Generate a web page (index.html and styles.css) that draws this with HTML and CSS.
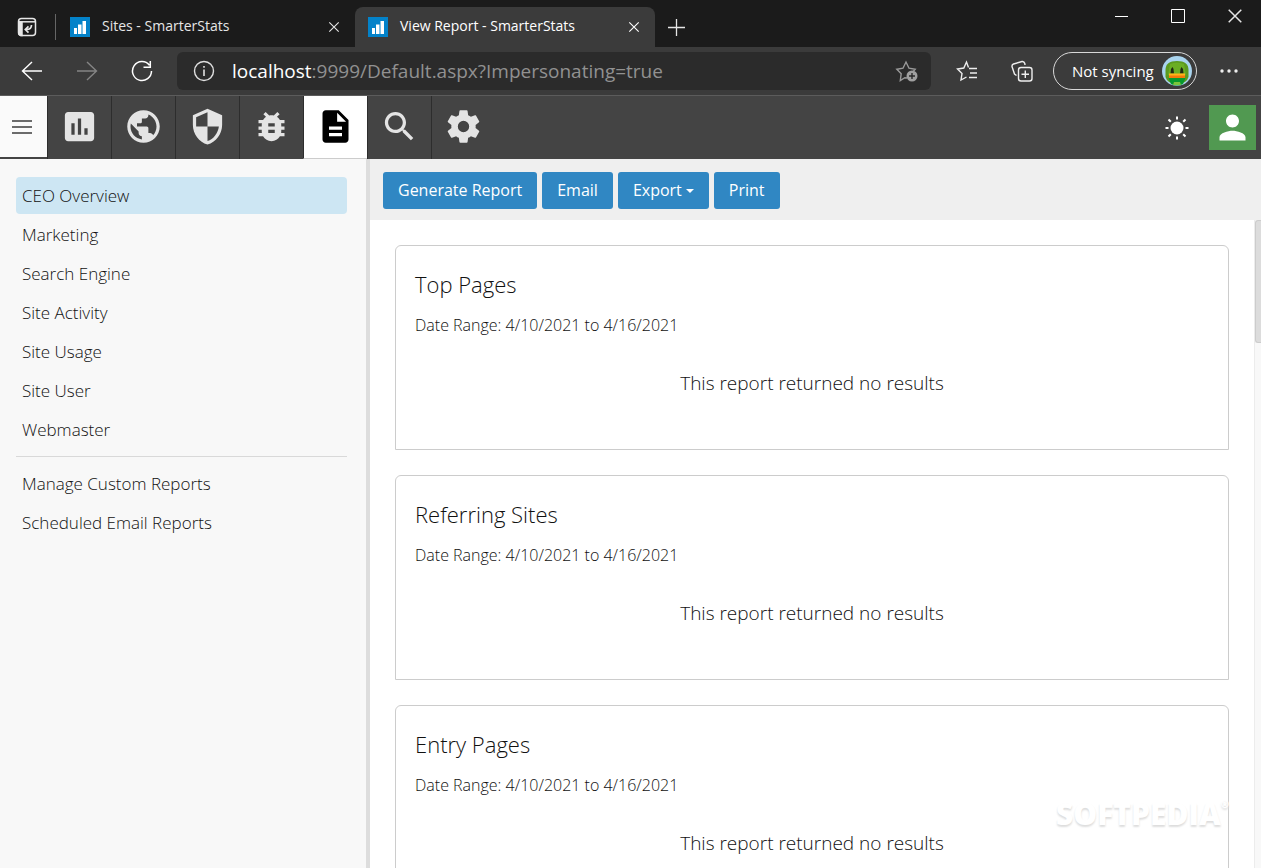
FILE: index.html
```html
<!DOCTYPE html>
<html lang="en">
<head>
<meta charset="utf-8">
<title>View Report - SmarterStats</title>
<link rel="stylesheet" href="styles.css">
</head>
<body>
<svg class="defs" aria-hidden="true">
  <symbol id="favicon" viewBox="0 0 20 20"><path fill="#0382c9" d="M0 0h20v20H0z"/><path fill="#fff" d="M4 11h3v6H4zM8 7.500h3.500V17H8zM12.500 4H16v13h-3.500z"/></symbol>
  <symbol id="close" viewBox="0 0 14 14"><path fill="none" stroke="currentColor" stroke-width="1.300" d="M1.500 1.500l11 11M12.500 1.500l-11 11"/></symbol>
</svg>
<div class="window">
  <header class="titlebar">
    <button class="tab-actions" aria-label="Tab actions menu">
      <svg width="20" height="20" viewBox="0 0 20 20" fill="none" stroke="#e6e6e6" stroke-width="1.500"><rect x="1.500" y="1.500" width="17" height="17" rx="3"/><path d="M1.500 4.800h17"/><path fill="#e6e6e6" d="M2 5h3v13.500H3.500L2 17z"/><path d="M14.500 8q0 4.500-5 4.500M11.500 9.300l-3.200 3.200 3.200 3.200" stroke-width="1.700"/></svg>
    </button>
    <span class="divider"></span>
    <div class="tab">
      <svg class="favicon"><use href="#favicon"/></svg>
      <span class="tab-title">Sites - SmarterStats</span>
      <button class="tab-close" aria-label="Close tab"><svg width="12" height="12"><use href="#close"/></svg></button>
    </div>
    <div class="tab tab-active">
      <svg class="favicon"><use href="#favicon"/></svg>
      <span class="tab-title">View Report - SmarterStats</span>
      <button class="tab-close" aria-label="Close tab"><svg width="12" height="12"><use href="#close"/></svg></button>
    </div>
    <button class="new-tab" aria-label="New tab"><svg width="18" height="18" viewBox="0 0 18 18" stroke="#e6e6e6" stroke-width="1.300"><path d="M9.500 1v17M1 9.500h17"/></svg></button>
    <div class="window-buttons">
      <button aria-label="Minimize"><svg width="14" height="14" viewBox="0 0 14 14" stroke="#fff"><path d="M1 7.500h13"/></svg></button>
      <button aria-label="Maximize"><svg width="14" height="14" viewBox="0 0 14 14" fill="none" stroke="#fff"><path d="M.5.500h13v13H.500z"/></svg></button>
      <button aria-label="Close"><svg width="16" height="16"><use href="#close"/></svg></button>
    </div>
  </header>

  <div class="navbar">
    <button class="nav-button" aria-label="Back"><svg width="22" height="20" viewBox="0 0 22 20" fill="none" stroke="#fff" stroke-width="1.400"><path d="M21 10H1.500M11 1L1.500 10 11 19"/></svg></button>
    <button class="nav-button" aria-label="Forward"><svg width="22" height="20" viewBox="0 0 22 20" fill="none" stroke="#858585" stroke-width="1.400"><path d="M1 10h19.500M11 1l9.500 9L11 19"/></svg></button>
    <button class="nav-button" aria-label="Refresh"><svg width="22" height="22" viewBox="0 0 22 22" fill="none" stroke="#fff" stroke-width="1.500"><path d="M20.500 11A9.500 9.500 0 1 1 18.500 5.200M19.300 1v6.200h-6.800"/></svg></button>
    <div class="address">
      <svg width="22" height="22" viewBox="0 0 22 22" fill="none" stroke="#e0e0e0" stroke-width="1.400"><circle cx="11" cy="11" r="9.500"/><path d="M11 9.500V16M11 6v1.700" stroke-width="1.600"/></svg>
      <span class="url"><b>localhost</b>:9999/Default.aspx?Impersonating=true</span>
      <button class="favorite" aria-label="Add to favorites"><svg width="24" height="24" viewBox="0 0 24 24" fill="none" stroke="#999" stroke-width="1.400"><path d="M12 19l-2.200-.3-4.500 2.800.9-6.800-4.400-4.500 6.200-1L11 3l3 6.200 6.200 1-2 2.300"/><circle cx="17" cy="17" r="5.500" fill="#a0a0a0" stroke="none"/><path stroke="#2b2b2b" d="M17 14v6M14 17h6"/></svg></button>
    </div>
    <button class="nav-button" aria-label="Favorites"><svg width="22" height="22" viewBox="0 0 22 22" fill="none" stroke="#eee" stroke-width="1.400"><path d="M12.500 7.500L10.500 2 7.800 8 1.500 9l4.500 4.500L5 20l5.500-3M13 8.500h8M14 13h7M13 17.500h8"/></svg></button>
    <button class="nav-button" aria-label="Collections"><svg width="22" height="22" viewBox="0 0 22 22" fill="none" stroke="#eee" stroke-width="1.400"><path d="M5.500 15.500L3.500 14 1 6.500Q.8 4.500 2.500 4L11 1.500q2.200-.3 2.800 2L14 5"/><rect x="7.500" y="7.500" width="13.500" height="13.500" rx="2.500"/><path d="M14.300 10.500v7.500M10.500 14.300H18"/></svg></button>
    <button class="profile">
      <span>Not syncing</span>
      <svg width="30" height="30" viewBox="0 0 30 30"><circle cx="15" cy="15" r="15" fill="#a9d4ee"/><path fill="#5b9a1f" d="M3.500 14Q3.500 5 15 5t11.500 9v7q-2 7-11.500 7T3.500 21z"/><path fill="#6aae24" d="M8 8q7-3 14 0l2 11H6z"/><path fill="#07992d" d="M6.500 22h17l-2.500 6q-6 3-12 0z"/><path fill="#202a12" d="M10.500 11l1 2 .5 4.500H8.500L9 13zM19.500 11l1.500 2 .5 4.500H18l.5-4.500z"/><path fill="#ffb31a" d="M7 17.500h16v3H7z"/><path fill="#f27a0a" d="M7 19.500h16v2.500H7z"/><path fill="#7cc43c" d="M12 26h6l1 3h-8z"/></svg>
    </button>
    <button class="more" aria-label="Settings and more"><svg width="18" height="4" viewBox="0 0 18 4" fill="#eee"><circle cx="2" cy="2" r="1.700"/><circle cx="9" cy="2" r="1.700"/><circle cx="16" cy="2" r="1.700"/></svg></button>
  </div>

  <nav class="appbar" aria-label="Sections">
    <button class="menu-button" aria-label="Toggle menu"><svg width="20" height="14" viewBox="0 0 20 14" fill="#6b6b6b"><path d="M0 0h20v2H0zM0 6h20v2H0zM0 12h20v2H0z"/></svg></button>
    <a class="section" href="#" aria-label="Overview"><svg class="section-icon" viewBox="0 0 24 24"><path d="M19 3H5c-1.100 0-2 .9-2 2v14c0 1.100.9 2 2 2h14c1.100 0 2-.9 2-2V5c0-1.100-.9-2-2-2zM9 17H7v-7h2v7zm4 0h-2V7h2v10zm4 0h-2v-4h2v4z"/></svg></a>
    <a class="section" href="#" aria-label="Sites"><svg class="section-icon" viewBox="0 0 24 24"><path d="M12 2C6.480 2 2 6.480 2 12s4.480 10 10 10 10-4.480 10-10S17.520 2 12 2zm-1 17.930c-3.950-.49-7-3.850-7-7.930 0-.62.080-1.210.21-1.790L9 15v1c0 1.100.9 2 2 2v1.930zm6.900-2.540c-.26-.81-1-1.390-1.900-1.390h-1v-3c0-.55-.45-1-1-1H8v-2h2c.55 0 1-.45 1-1V7h2c1.100 0 2-.9 2-2v-.41c2.930 1.190 5 4.060 5 7.410 0 2.080-.8 3.970-2.100 5.390z"/></svg></a>
    <a class="section" href="#" aria-label="Security"><svg class="section-icon" viewBox="0 0 24 24"><path d="M12 1L3 5v6c0 5.550 3.840 10.740 9 12 5.160-1.260 9-6.450 9-12V5l-9-4zm0 10.990h7c-.53 4.120-3.280 7.790-7 8.940V12H5V6.300l7-3.110v8.800z"/></svg></a>
    <a class="section" href="#" aria-label="Debug"><svg class="section-icon" viewBox="0 0 24 24"><path d="M20 8h-2.810c-.45-.78-1.070-1.450-1.820-1.960L17 4.410 15.590 3l-2.170 2.170C12.960 5.060 12.490 5 12 5c-.49 0-.96.060-1.410.17L8.410 3 7 4.410l1.620 1.630C7.880 6.550 7.260 7.220 6.810 8H4v2h2.090c-.05.33-.09.66-.09 1v1H4v2h2v1c0 .34.040.67.090 1H4v2h2.810c1.040 1.790 2.970 3 5.190 3s4.150-1.210 5.190-3H20v-2h-2.090c.05-.33.090-.66.090-1v-1h2v-2h-2v-1c0-.34-.04-.67-.09-1H20V8zm-6 8h-4v-2h4v2zm0-4h-4v-2h4v2z"/></svg></a>
    <a class="section section-active" href="#" aria-label="Reports" aria-current="page"><svg class="section-icon" viewBox="0 0 24 24"><path d="M14 2H6c-1.100 0-1.990.9-1.990 2L4 20c0 1.100.89 2 1.990 2H18c1.100 0 2-.9 2-2V8l-6-6zm2 16H8v-2h8v2zm0-4H8v-2h8v2zm-3-5V3.500L18.500 9H13z"/></svg></a>
    <a class="section" href="#" aria-label="Search"><svg class="section-icon" viewBox="0 0 24 24"><path d="M15.500 14h-.79l-.28-.27C15.410 12.590 16 11.110 16 9.500 16 5.910 13.090 3 9.500 3S3 5.910 3 9.500 5.910 16 9.500 16c1.610 0 3.090-.59 4.230-1.570l.27.28v.79l5 4.990L20.490 19l-4.990-5zm-6 0C7.010 14 5 11.990 5 9.500S7.010 5 9.500 5 14 7.010 14 9.500 11.990 14 9.500 14z"/></svg></a>
    <a class="section" href="#" aria-label="Settings"><svg class="section-icon" viewBox="0 0 24 24"><path d="M12 15.500A3.500 3.500 0 0 1 8.500 12 3.500 3.500 0 0 1 12 8.500a3.500 3.500 0 0 1 3.500 3.500 3.500 3.500 0 0 1-3.500 3.500m7.430-2.530c.04-.32.070-.64.070-.97s-.03-.66-.07-1l2.110-1.630c.19-.15.240-.42.120-.64l-2-3.460c-.12-.22-.39-.31-.61-.22l-2.490 1c-.52-.39-1.060-.73-1.690-.98l-.37-2.650A.506.506 0 0 0 14 2h-4c-.25 0-.46.180-.5.420l-.37 2.650c-.63.250-1.170.59-1.690.98l-2.490-1c-.22-.09-.49 0-.61.220l-2 3.460c-.13.220-.07.490.120.640L4.570 11c-.04.340-.07.670-.07 1s.03.650.070.970l-2.110 1.660c-.19.150-.25.420-.12.640l2 3.460c.12.220.39.300.61.220l2.490-1.010c.52.400 1.060.74 1.690.99l.37 2.650c.04.240.25.420.5.420h4c.25 0 .46-.18.500-.42l.37-2.650c.63-.26 1.170-.59 1.690-.99l2.490 1.010c.22.080.49 0 .61-.22l2-3.460c.12-.22.070-.49-.12-.64z"/></svg></a>
    <div class="account">
      <button class="theme" aria-label="Light theme"><svg width="24" height="24" viewBox="0 0 24 24" fill="#fff" stroke="#fff" stroke-width="2"><circle cx="12" cy="12" r="6.500" stroke="none"/><path d="M12 .5v3M12 20.500v3M.5 12h3M20.500 12h3M3.500 3.500l2.300 2.300M18.200 18.200l2.300 2.300M3.500 20.500l2.300-2.300M18.200 5.800l2.300-2.300"/></svg></button>
      <button class="user" aria-label="Account"><svg width="39" height="39" viewBox="0 0 24 24" fill="#fff"><path d="M12 12c2.210 0 4-1.790 4-4s-1.790-4-4-4-4 1.790-4 4 1.790 4 4 4zm0 2c-2.670 0-8 1.340-8 4v2h16v-2c0-2.660-5.330-4-8-4z"/></svg></button>
    </div>
  </nav>

  <div class="content">
    <aside class="sidebar">
      <a class="side-link side-active" href="#">CEO Overview</a>
      <a class="side-link" href="#">Marketing</a>
      <a class="side-link" href="#">Search Engine</a>
      <a class="side-link" href="#">Site Activity</a>
      <a class="side-link" href="#">Site Usage</a>
      <a class="side-link" href="#">Site User</a>
      <a class="side-link" href="#">Webmaster</a>
      <hr class="side-rule">
      <a class="side-link" href="#">Manage Custom Reports</a>
      <a class="side-link" href="#">Scheduled Email Reports</a>
    </aside>
    <main class="main">
      <div class="actions">
        <button class="action">Generate Report</button>
        <button class="action">Email</button>
        <button class="action">Export<span class="caret"></span></button>
        <button class="action">Print</button>
      </div>
      <div class="scroller">
        <div class="reports">
          <section class="card"><h2>Top Pages</h2><p class="range">Date Range: 4/10/2021 to 4/16/2021</p><p class="empty">This report returned no results</p></section>
          <section class="card"><h2>Referring Sites</h2><p class="range">Date Range: 4/10/2021 to 4/16/2021</p><p class="empty">This report returned no results</p></section>
          <section class="card"><h2>Entry Pages</h2><p class="range">Date Range: 4/10/2021 to 4/16/2021</p><p class="empty">This report returned no results</p></section>
        </div>
        <div class="scrollbar"><div class="thumb"></div></div>
      </div>
    </main>
  </div>
  <div class="watermark">SOFTPEDIA<sup>®</sup></div>
</div>
</body>
</html>
```
FILE: styles.css
```css
* { box-sizing: border-box; }
body { margin: 0; font-family: "Open Sans", "Noto Sans", sans-serif; color: #111; }
button { margin: 0; padding: 0; border: 0; background: none; font: inherit; color: inherit; }
a { color: inherit; text-decoration: none; }
h2, p { margin: 0; }
svg { display: block; flex: none; }
.defs { position: absolute; width: 0; height: 0; }

.window { position: relative; display: flex; flex-direction: column; height: 100vh; overflow: hidden; }

.titlebar { display: flex; align-items: flex-end; flex: none; height: 47px; background: #1b1b1b; color: #e6e6e6; }
.tab-actions { display: flex; align-items: center; justify-content: center; width: 54px; height: 40px; }
.divider { width: 1px; height: 26px; margin: 7px 1px; background: #666; }
.tab { display: flex; align-items: center; width: 298px; height: 40px; padding: 0 13px; font-size: 14px; line-height: 18px; }
.tab-active { width: 300px; background: #3b3b3b; border-radius: 8px 8px 0 0; color: #fff; }
.favicon { width: 20px; height: 20px; }
.tab-title { flex: 1; margin-left: 12px; padding-bottom: 2px; white-space: nowrap; }
.tab-close { display: flex; padding: 2px; }
.new-tab { display: flex; align-items: center; justify-content: center; width: 42px; height: 40px; }
.window-buttons { display: flex; gap: 5px; align-self: flex-start; margin-left: auto; }
.window-buttons button { display: flex; align-items: center; justify-content: center; width: 52px; height: 32px; }

.navbar { display: flex; align-items: center; flex: none; height: 49px; padding: 0 4px; background: #3b3b3b; border-bottom: 1px solid #5c5c5c; }
.nav-button { display: flex; align-items: center; justify-content: center; width: 55px; height: 38px; }
.address { display: flex; align-items: center; flex: 1; height: 38px; margin: 0 8px; padding: 0 12px 0 16px; border-radius: 6px; background: #2b2b2b; }
.url { flex: 1; margin-left: 17px; font-size: 19px; line-height: 24px; color: #919191; white-space: nowrap; }
.url b { font-weight: 400; color: #fff; }
.favorite { display: flex; }
.profile { display: flex; align-items: center; justify-content: space-between; width: 144px; height: 38px; margin-left: 4px; padding: 0 4px 0 18px; border: 1px solid #d8d8d8; border-radius: 19px; color: #fff; font-size: 15px; white-space: nowrap; }
.more { display: flex; align-items: center; justify-content: center; width: 60px; height: 38px; padding-left: 4px; }

.appbar { display: flex; flex: none; height: 63px; background: #444; }
.menu-button { display: flex; align-items: center; justify-content: center; width: 47px; height: 61px; padding-right: 3px; background: #fafafa; }
.section { display: flex; align-items: center; justify-content: center; width: 64px; padding-bottom: 3px; border-left: 1px solid #2d2d2d; }
.section-icon { width: 39px; height: 39px; fill: #e4e4e4; }
.section-active { background: #fff; border-bottom: 1px solid #ccc; padding-bottom: 2px; }
.section-active .section-icon { fill: #000; }
.account { display: flex; align-items: center; gap: 20px; margin-left: auto; padding-right: 5px; }
.user { display: flex; align-items: center; justify-content: center; width: 47px; height: 45px; background: #519951; }

.content { display: flex; flex: 1; min-height: 0; }
.sidebar { display: flex; flex-direction: column; gap: 2px; flex: none; width: 370px; padding: 18px 19px 18px 16px; background: #f8f8f8; border-right: 4px solid #ddd; }
.side-link { padding: 6px; border-radius: 4px; font-size: 17px; font-weight: 300; line-height: 25px; }
.side-active { background: #cde6f3; }
.side-rule { width: 100%; height: 1px; margin: 6px 0; border: 0; background: #d9d9d9; }

.main { display: flex; flex-direction: column; flex: 1; min-width: 0; }
.actions { display: flex; gap: 5px; flex: none; padding: 13px 13px 11px; background: #efefef; }
.action { display: flex; align-items: center; gap: 4px; padding: 6px 15px; border-radius: 3px; background: #3087c3; color: #fff; font-size: 16px; line-height: 25px; white-space: nowrap; }
.caret { border: 4px solid transparent; border-top-color: #fff; border-bottom: 0; }
.scroller { display: flex; flex: 1; min-height: 0; background: #fff; }
.reports { display: flex; flex-direction: column; gap: 25px; flex: 1; padding: 25px; overflow: hidden; }
.card { flex: none; padding: 24px 19px 52px; border: 1px solid #ccc; border-radius: 6px 6px 0 0; font-weight: 300; }
.card h2 { font-size: 22px; font-weight: 300; line-height: 28px; }
.range { margin-top: 15px; font-size: 16px; line-height: 24px; }
.empty { margin-top: 32px; font-size: 19px; line-height: 28px; text-align: center; }
.scrollbar { flex: none; width: 7px; background: #f8f8f8; border-left: 1px solid #ececec; }
.thumb { height: 123px; background: #dcdcdc; border: 1px solid #ccc; border-right: 0; border-radius: 3px 0 0 3px; }

.watermark { position: absolute; right: 32px; bottom: 34px; display: flex; font-size: 30px; font-weight: 800; line-height: 40px; color: #fff; text-shadow: 0 2px 2px #ddd; }
.watermark sup { font-size: 10px; line-height: 20px; }
```
